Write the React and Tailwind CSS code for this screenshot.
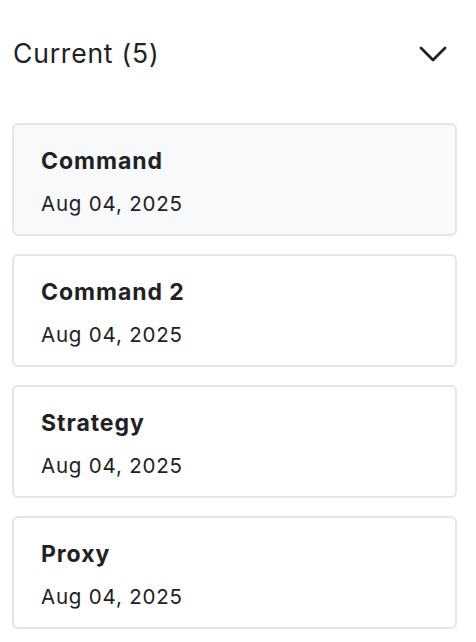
import React from "react";

const items = [
  { id: 1, title: "Command", date: "Aug 04, 2025", active: true },
  { id: 2, title: "Command 2", date: "Aug 04, 2025" },
  { id: 3, title: "Strategy", date: "Aug 04, 2025" },
  { id: 4, title: "Proxy", date: "Aug 04, 2025" },
];

export default function App() {
  return (
    <div
      className="w-[476px] h-[642px] overflow-hidden bg-white px-3 text-[#1f2125]"
      style={{ fontFamily: "Inter, 'Noto Sans', sans-serif" }}
    >
      <div className="flex items-center justify-between h-[108px] pl-px pr-[18px]">
        <h2 className="text-[26.5px] font-normal tracking-[0.8px]">Current (5)</h2>
        <svg width="28" height="16" viewBox="0 0 28 16" fill="none" stroke="currentColor" strokeWidth="2.8" strokeLinecap="round" strokeLinejoin="round" className="mr-[-1px]">
          <path d="M2 2l12 12 12-12" />
        </svg>
      </div>

      <div className="flex flex-col gap-[18px] mt-[15px]">
        {items.map((item) => (
          <div
            key={item.id}
            className={
              "w-[445px] h-[113px] rounded-md border-2 border-[#e3e5e9] px-[27px] pt-[6px] flex flex-col justify-center " +
              (item.active ? "bg-[#f8f9fb]" : "bg-white")
            }
          >
            <div className="text-[23px] font-bold leading-none tracking-[0.95px]">{item.title}</div>
            <div className="text-[20.5px] leading-none pt-[21px] tracking-[0.8px]">{item.date}</div>
          </div>
        ))}
      </div>
    </div>
  );
}
